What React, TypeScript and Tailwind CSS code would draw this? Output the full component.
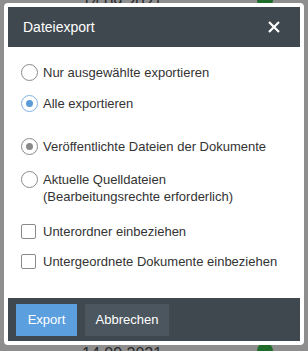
import React from 'react'

function Radio({ state, label, sub }: { state: 'off' | 'blue' | 'gray'; label: string; sub?: string }) {
  const ring = state === 'blue' ? 'border-[#7fb2e5]' : 'border-[#8a8a8a]'
  return (
    <div className="flex items-start gap-[5px]">
      <span className={`mt-[0px] flex h-[17px] w-[17px] shrink-0 items-center justify-center rounded-full border-[1.5px] bg-white ${ring}`}>
        {state === 'blue' && <span className="h-[7px] w-[7px] rounded-full bg-[#5b9bd8]" />}
        {state === 'gray' && <span className="h-[7px] w-[7px] rounded-full bg-[#8a8a8a]" />}
      </span>
      <span className="leading-[17px]">
        {label}
        {sub && <span className="block">{sub}</span>}
      </span>
    </div>
  )
}

function Check({ label }: { label: string }) {
  return (
    <div className="flex items-center gap-[7px]">
      <span className="h-[15px] w-[15px] shrink-0 rounded-[2px] border border-[#8a8a8a] bg-white" />
      <span className="leading-[17px]">{label}</span>
    </div>
  )
}

export default function App() {
  return (
    <div className="relative h-[351px] w-[308px] overflow-hidden bg-[#8e8e8e] font-['Liberation_Sans',Arial,sans-serif]">
      {/* page behind the overlay */}
      <div className="absolute left-[82px] top-[-9px] text-[16px] text-[#2a2a2a]">14.09.2021</div>
      <div className="absolute left-[257px] top-[-8px] h-[16px] w-[16px] rounded-full bg-[#1f6b2a]" />
      <div className="absolute left-[82px] top-[342px] text-[16px] text-[#2a2a2a]">14.09.2021</div>
      <div className="absolute left-[257px] top-[343px] h-[16px] w-[16px] rounded-full bg-[#1f6b2a]" />

      <div className="absolute left-[4px] top-[3px] flex h-[342px] w-[300px] flex-col rounded-[4px] bg-white p-[4px]">
        <div className="flex h-[40px] items-center justify-between bg-[#40484f] pl-[15px] pr-[20px] text-white">
          <span className="text-[14px]">Dateiexport</span>
          <svg width="12" height="12" viewBox="0 0 12 12">
            <path d="M1 1 L11 11 M11 1 L1 11" stroke="white" strokeWidth="2.2" />
          </svg>
        </div>

        <div className="flex flex-1 flex-col pl-[13px] pt-[17px] text-[13px] text-[#333]">
          <Radio state="off" label="Nur ausgewählte exportieren" />
          <div className="mt-[14px]">
            <Radio state="blue" label="Alle exportieren" />
          </div>
          <div className="mt-[26px]">
            <Radio state="gray" label="Veröffentlichte Dateien der Dokumente" />
          </div>
          <div className="mt-[16px]">
            <Radio state="off" label="Aktuelle Quelldateien" sub="(Bearbeitungsrechte erforderlich)" />
          </div>
          <div className="mt-[18px]">
            <Check label="Unterordner einbeziehen" />
          </div>
          <div className="mt-[13px]">
            <Check label="Untergeordnete Dokumente einbeziehen" />
          </div>
        </div>

        <div className="flex h-[43px] items-center gap-[8px] bg-[#40484f] px-[8px]">
          <button className="h-[32px] w-[61px] bg-[#5b9fdf] text-[13px] text-white">Export</button>
          <button className="h-[32px] w-[84px] bg-[#4b565e] text-[13px] text-white">Abbrechen</button>
        </div>
      </div>
    </div>
  )
}
